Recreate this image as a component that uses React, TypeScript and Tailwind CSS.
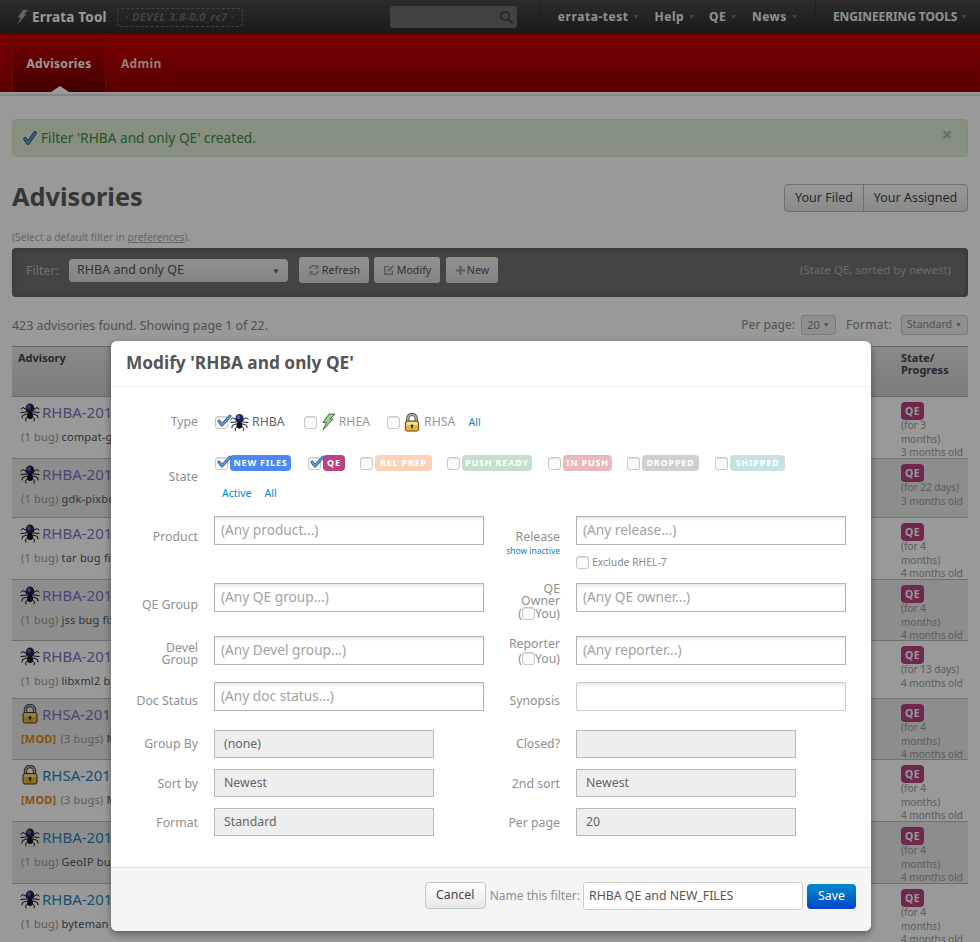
import React from "react";

function Bolt({ gray = false, className = "" }: { gray?: boolean; className?: string }) {
  return (
    <svg viewBox="0 0 16 18" className={className}>
      <path
        d="M9 1 L15 1 L10 6 L13 6 L3 17 L6.5 9.5 L3 9.5 Z"
        fill={gray ? "#a8a8a8" : "#9ccf8a"}
        stroke={gray ? "none" : "#4c6e4a"}
        strokeWidth="1"
        strokeLinejoin="round"
      />
    </svg>
  );
}

function Spider({ className = "" }: { className?: string }) {
  return (
    <svg viewBox="0 0 20 20" className={className}>
      <g stroke="#111" strokeWidth="1" fill="none" strokeLinecap="round">
        <path d="M7 8 L3 5.5 L1 7" />
        <path d="M13 8 L17 5.5 L19 7" />
        <path d="M6.5 10 L1 10.5" />
        <path d="M13.5 10 L19 10.5" />
        <path d="M7 12 L2.5 13.5 L2 16" />
        <path d="M13 12 L17.5 13.5 L18 16" />
        <path d="M8 14 L5.5 17 L6 19" />
        <path d="M12 14 L14.5 17 L14 19" />
      </g>
      <ellipse cx="10" cy="6.5" rx="4.3" ry="5" fill="#1d2350" />
      <ellipse cx="9" cy="5" rx="1.8" ry="2.2" fill="#5a64a8" />
      <ellipse cx="10" cy="13.5" rx="3" ry="3.5" fill="#0d0f25" />
    </svg>
  );
}

function Lock({ className = "" }: { className?: string }) {
  return (
    <svg viewBox="0 0 16 20" className={className}>
      <path d="M3.5 9 V6 a4.5 4.5 0 0 1 9 0 V9" fill="none" stroke="#444" strokeWidth="3.4" />
      <path d="M3.5 9 V6 a4.5 4.5 0 0 1 9 0 V9" fill="none" stroke="#b9b9b9" strokeWidth="1.6" />
      <rect x="1" y="8.5" width="14" height="10.5" rx="2" fill="#e6b93c" stroke="#4a3a10" strokeWidth="1" />
      <rect x="2" y="9.5" width="12" height="3" rx="1" fill="#f7e08a" />
      <circle cx="8" cy="13.5" r="1.5" fill="#3a2d08" />
      <rect x="7.4" y="13.5" width="1.2" height="3" fill="#3a2d08" />
    </svg>
  );
}

function Check({ on = false }: { on?: boolean }) {
  return (
    <span className="relative block h-[13px] w-[13px] shrink-0 rounded-[3px] border border-[#c8c8c0] bg-[#fbfbfb] shadow-[inset_0_1px_1px_rgba(0,0,0,0.12)]">
      {on && (
        <svg viewBox="0 0 16 14" className="absolute left-0 top-[-3px] h-[14px] w-[16px]">
          <path d="M3 7 L6 11 L14 2" fill="none" stroke="#35577f" strokeWidth="3" strokeLinecap="round" strokeLinejoin="round" />
          <path d="M3 7 L6 11 L14 2" fill="none" stroke="#5b9be6" strokeWidth="1.7" strokeLinecap="round" strokeLinejoin="round" />
        </svg>
      )}
    </span>
  );
}

function StateItem({ text, on, color, className }: { text: string; on?: boolean; color: string; className: string }) {
  return (
    <span className={`flex items-center gap-[2px] ${className}`}>
      <Check on={on} />
      <span className={`block h-[16px] rounded-[4px] text-center text-[9px] font-bold leading-[16px] tracking-[0.8px] whitespace-nowrap text-white ${color}`}>
        {text}
      </span>
    </span>
  );
}

function Field({ placeholder, value, className = "" }: { placeholder?: string; value?: string; className?: string }) {
  return (
    <div className={`h-[29px] w-[270px] border border-[#b2b2b2] bg-white px-[6px] text-[13.7px] leading-[25px] text-[#a3a3a3] shadow-[inset_0_4px_4px_-3px_rgba(0,0,0,0.14)] ${className}`}>
      {placeholder ?? value}
    </div>
  );
}

function Select({ value }: { value: string }) {
  return (
    <div className="h-[28px] w-[220px] border border-[#b8b8b8] bg-[#eeeeee] px-[9px] text-[12.3px] leading-[26px] text-[#666]">
      {value}
    </div>
  );
}

const Label = ({ children, className = "" }: { children: React.ReactNode; className?: string }) => (
  <div className={`text-right text-[12.3px] leading-[12px] text-[#8f8f8f] ${className}`}>{children}</div>
);

const rowCols = "grid grid-cols-[87px_270px_60px_270px] gap-x-4";

const rows = [
  { h: "h-[62px]", id: "RHBA-2013:15532", kind: "b", visited: true, note: "(1 bug)", txt: "compat-gcc bug fix update", a: "(for 3", b: "months)", c: "3 months old" },
  { h: "h-[59px]", id: "RHBA-2013:15476", kind: "b", visited: true, note: "(1 bug)", txt: "gdk-pixbuf2 bug fix update", a: "(for 22 days)", c: "3 months old" },
  { h: "h-[62px]", id: "RHBA-2013:15423", kind: "b", visited: true, note: "(1 bug)", txt: "tar bug fix update", a: "(for 4", b: "months)", c: "4 months old" },
  { h: "h-[61px]", id: "RHBA-2013:15419", kind: "b", visited: true, note: "(1 bug)", txt: "jss bug fix update", a: "(for 4", b: "months)", c: "4 months old" },
  { h: "h-[58px]", id: "RHBA-2013:15398", kind: "b", visited: true, note: "(1 bug)", txt: "libxml2 bug fix update", a: "(for 13 days)", c: "4 months old" },
  { h: "h-[61px]", id: "RHSA-2013:15377", kind: "s", visited: true, note: "(3 bugs)", txt: "Moderate: update", a: "(for 4", b: "months)", c: "4 months old" },
  { h: "h-[62px]", id: "RHSA-2013:15376", kind: "s", visited: false, note: "(3 bugs)", txt: "Moderate: update", a: "(for 4", b: "months)", c: "4 months old" },
  { h: "h-[62px]", id: "RHBA-2013:15360", kind: "b", visited: false, note: "(1 bug)", txt: "GeoIP bug fix update", a: "(for 4", b: "months)", c: "4 months old" },
  { h: "h-[62px]", id: "RHBA-2013:15358", kind: "b", visited: false, note: "(1 bug)", txt: "byteman bug fix update", a: "(for 4", b: "months)", c: "4 months old" },
];

export default function App() {
  return (
    <div className="relative h-[942px] w-[980px] overflow-hidden bg-[#ffffff] font-['Noto_Sans','Liberation_Sans',sans-serif]">
      {/* top bar */}
      <div className="flex h-[34px] items-center bg-gradient-to-b from-[#4a4a4a] to-[#2c2c2c] text-[12px] font-bold text-[#f0f0f0]">
        <Bolt gray className="ml-[15px] h-[18px] w-[14px]" />
        <span className="ml-[3px] text-[13.5px] tracking-[0.2px] text-[#ffffff]">Errata Tool</span>
        <span className="ml-[10px] flex h-[19px] w-[126px] items-center justify-center rounded-[4px] border border-dashed border-[#6f6f6f] text-[11px] italic tracking-[0.4px] text-[#6f6f6f]">
          · DEVEL 3.8-0.0_rc7 ·
        </span>
        <div className="ml-[147px] flex h-[22px] w-[127px] items-center justify-end rounded-[3px] bg-[#6e6e6e] pr-[3px]">
          <svg viewBox="0 0 16 16" className="h-[15px] w-[15px]">
            <circle cx="6.5" cy="6.5" r="4.5" fill="none" stroke="#3c3c3c" strokeWidth="1.6" />
            <path d="M10 10 L14.5 14.5" stroke="#3c3c3c" strokeWidth="2.2" />
          </svg>
        </div>
        <div className="ml-[23px] h-[34px] w-px bg-[#333333]" />
        <span className="ml-[17px] tracking-[0.55px]">errata-test</span>
        <span className="ml-[4px] w-[7px] text-[7px] text-[#777]">▼</span>
        <span className="ml-[15px] tracking-[0.5px]">Help</span>
        <span className="ml-[4px] w-[7px] text-[7px] text-[#777]">▼</span>
        <span className="ml-[14px] tracking-[0.3px]">QE</span>
        <span className="ml-[4px] w-[7px] text-[7px] text-[#777]">▼</span>
        <span className="ml-[15px] tracking-[0.5px]">News</span>
        <span className="ml-[4px] w-[7px] text-[7px] text-[#777]">▼</span>
        <div className="ml-[17px] h-[34px] w-px bg-[#333333]" />
        <span className="ml-[17px] tracking-[-0.1px]">ENGINEERING TOOLS</span>
        <span className="ml-[3px] w-[7px] text-[7px] text-[#777]">▼</span>
      </div>

      {/* red bar */}
      <div className="flex h-[58px] bg-gradient-to-b from-[#cc0000] to-[#960000] pl-[12px] text-[12px] font-bold tracking-[0.3px]">
        <div className="relative flex w-[94px] items-start justify-center border-x border-[#b01010] bg-gradient-to-b from-[#cc0000] to-[#6f0000] pt-[21px] text-[#ffffff]">
          Advisories
          <svg viewBox="0 0 18 6" className="absolute bottom-0 left-[38px] h-[6px] w-[18px]">
            <path d="M0 6 L9 0 L18 6 Z" fill="#ffffff" />
          </svg>
        </div>
        <div className="ml-[15px] pt-[21px] text-[#f4d0d0]">Admin</div>
      </div>
      <div className="mt-[2px] h-[2px] bg-[#dddddd]" />

      <div className="px-[12px]">
        {/* alert */}
        <div className="relative mt-[23px] flex h-[38px] items-center rounded-[4px] border border-[#d6e9c6] bg-[#dff0d8] pl-[9px] text-[13.7px] text-[#468847]">
          <svg viewBox="0 0 16 16" className="mr-[3px] h-[16px] w-[16px]">
            <path d="M3 9 L6 13 L13 3" fill="none" stroke="#1f3d66" strokeWidth="3.6" strokeLinecap="round" strokeLinejoin="round" />
            <path d="M3 9 L6 13 L13 3" fill="none" stroke="#6ea4e8" strokeWidth="2" strokeLinecap="round" strokeLinejoin="round" />
          </svg>
          Filter 'RHBA and only QE' created.
          <span className="absolute right-[15px] top-[2px] text-[18px] font-bold leading-[24px] text-[#a9b5a3]">×</span>
        </div>

        {/* heading */}
        <div className="mt-[20px] flex h-[53px] items-start justify-between">
          <h1 className="text-[25.3px] font-bold leading-[38px] text-[#5a5a5a]">Advisories</h1>
          <div className="mt-[7px] flex h-[28px] rounded-[4px] border border-[#bbbbbb] bg-gradient-to-b from-[#ffffff] to-[#e6e6e6] text-[12.5px] leading-[26px] text-[#444444]">
            <span className="w-[79px] border-r border-[#bbbbbb] text-center">Your Filed</span>
            <span className="w-[103px] text-center">Your Assigned</span>
          </div>
        </div>

        <div className="h-[15px] text-[10.2px] leading-[15px] text-[#aaaaaa]">
          (Select a default filter in <span className="underline">preferences</span>).
        </div>

        {/* filter panel */}
        <div className="mt-[3px] flex h-[49px] items-start rounded-[4px] bg-[#727272] pl-[14px] text-[12px] shadow-[inset_0_0_6px_rgba(0,0,0,0.3)]">
          <span className="mt-[14px] text-[12.5px] text-[#bbbbbb]">Filter:</span>
          <div className="ml-[10px] mt-[11px] flex h-[23px] w-[219px] items-center justify-between rounded-[4px] bg-gradient-to-b from-[#f0f0f0] to-[#dcdcdc] pl-[8px] pr-[8px] text-[12.5px] text-[#555555]">
            RHBA and only QE
            <span className="text-[8px] text-[#666666]">▼</span>
          </div>
          <div className="ml-[11px] mt-[9px] flex h-[26px] w-[70px] items-center justify-center gap-[2px] rounded-[3px] bg-gradient-to-b from-[#f2f2f2] to-[#dcdcdc] text-[10.7px] text-[#555555]">
            <svg viewBox="0 0 14 14" className="h-[12px] w-[12px]"><path d="M2 6 A5 5 0 0 1 11 4 M12 8 A5 5 0 0 1 3 10" fill="none" stroke="#999" strokeWidth="1.6" /><path d="M11.5 1 V5 H8 M2.5 13 V9 H6" fill="none" stroke="#999" strokeWidth="1.2" /></svg>
            Refresh
          </div>
          <div className="ml-[5px] mt-[9px] flex h-[26px] w-[66px] items-center justify-center gap-[2px] rounded-[3px] bg-gradient-to-b from-[#f2f2f2] to-[#dcdcdc] text-[10.7px] text-[#555555]">
            <svg viewBox="0 0 14 14" className="h-[12px] w-[12px]"><path d="M11 8 V12 H2 V3 H7" fill="none" stroke="#999" strokeWidth="1.6" /><path d="M5.5 9 L6 6.5 L11.5 1.5 L13 3 L7.5 8.5 Z" fill="#999" /></svg>
            Modify
          </div>
          <div className="ml-[6px] mt-[9px] flex h-[26px] w-[52px] items-center justify-center gap-[1px] rounded-[3px] bg-gradient-to-b from-[#f2f2f2] to-[#dcdcdc] text-[10.7px] text-[#555555]">
            <svg viewBox="0 0 12 12" className="h-[11px] w-[11px]"><path d="M6 1 V11 M1 6 H11" stroke="#999" strokeWidth="2.4" /></svg>
            New
          </div>
          <span className="ml-auto mr-[17px] mt-[13px] text-[11.5px] text-[#b4b4b4]">(State QE, sorted by newest)</span>
        </div>

        {/* result info */}
        <div className="mt-[16px] flex h-[33px] items-start justify-between">
          <span className="mt-[4px] text-[12.4px] text-[#888888]">423 advisories found. Showing page 1 of 22.</span>
          <div className="mt-[2px] flex items-center text-[12px] text-[#888888]">
            <span>Per page:</span>
            <span className="ml-[6px] flex h-[20px] w-[35px] items-center justify-center gap-[3px] rounded-[3px] border border-[#cccccc] bg-[#eeeeee] text-[11px]">
              20 <span className="text-[7px]">▼</span>
            </span>
            <span className="ml-[10px] tracking-[0.3px]">Format:</span>
            <span className="ml-[9px] flex h-[20px] w-[67px] items-center justify-center gap-[3px] rounded-[3px] border border-[#cccccc] bg-[#eeeeee] text-[10.5px]">
              Standard <span className="text-[7px]">▼</span>
            </span>
          </div>
        </div>

        {/* table */}
        <div className="relative flex h-[51px] justify-between border-y border-[#aaaaaa] bg-gradient-to-b from-[#e6e6e6] to-[#cfcfcf] pt-[3px] text-[11px] font-bold leading-[12px] text-[#444444]">
          <span className="ml-[6px] mt-[2px]">Advisory</span>
          <span className="mr-[17px] mt-[2px] w-[50px]">State/<br />Progress</span>
        </div>
        {rows.map((r, i) => (
          <div key={r.id} className={`relative flex justify-between border-b border-[#bbbbbb] ${r.h} ${i % 2 === 1 ? "bg-[#ebebeb]" : "bg-[#ffffff]"}`}>
            <div className="ml-[8px] pt-[5px]">
              <div className="flex h-[20px] items-center gap-[2px] text-[15px]">
                {r.kind === "b" ? <Spider className="h-[20px] w-[20px]" /> : <Lock className="ml-[2px] mr-[2px] h-[20px] w-[16px]" />}
                <span className={r.visited ? "text-[#8471c2]" : "text-[#1d87bd]"}>{r.id}</span>
              </div>
              <div className="ml-[1px] mt-[8px] text-[11px] leading-[14px] tracking-[0.2px]">
                {r.kind === "s" && <span className="mr-[4px] font-bold text-[#dd8a12]">[MOD]</span>}
                <span className="text-[#999999]">{r.note}</span> <span className="text-[#555555]">{r.txt}</span>
              </div>
            </div>
            <div className="w-[67px] pt-[5px] text-[10px] leading-[13.5px] text-[#999999]">
              <span className="block h-[18px] w-[23px] rounded-[4px] bg-[#b94283] text-center text-[10.5px] font-bold leading-[18px] tracking-[0.5px] text-white">QE</span>
              <div className="mt-[-1px]">{r.a}</div>
              {r.b && <div>{r.b}</div>}
              <div>{r.c}</div>
            </div>
          </div>
        ))}
      </div>

      {/* overlay */}
      <div className="absolute inset-0 bg-black/40" />

      {/* modal */}
      <div className="absolute left-[111px] top-[341px] flex h-[590px] w-[760px] flex-col overflow-hidden rounded-[6px] bg-white shadow-[0_3px_7px_rgba(0,0,0,0.4)]">
        <div className="h-[46px] shrink-0 border-b border-[#eeeeee] pl-[15px] pt-[8px] text-[17.3px] font-bold leading-[27px] text-[#555555]">
          Modify 'RHBA and only QE'
        </div>
        <div className="flex-1 text-[12.3px]">
          {/* Type */}
          <div className="mt-[25px] flex h-[20px] items-center">
            <div className="w-[87px] text-right text-[#8f8f8f]">Type</div>
            <span className="ml-[17px]"><Check on /></span>
            <Spider className="ml-[2px] h-[20px] w-[19px]" />
            <span className="ml-[3px] text-[#666666]">RHBA</span>
            <span className="ml-[19px]"><Check /></span>
            <Bolt className="ml-[3px] h-[18px] w-[16px]" />
            <span className="ml-[3px] text-[#999999]">RHEA</span>
            <span className="ml-[17px]"><Check /></span>
            <Lock className="ml-[4px] h-[19px] w-[16px]" />
            <span className="ml-[4px] text-[#999999]">RHSA</span>
            <span className="ml-[13px] mt-[2px] text-[10.5px] text-[#0088cc]">All</span>
          </div>
          {/* State */}
          <div className="mt-[23px] flex h-[16px] items-start">
            <div className="w-[87px] pt-[13px] text-right leading-[18px] text-[#8f8f8f]">State</div>
            <StateItem on text="NEW FILES" color="w-[61px] bg-[#4b88f0]" className="ml-[17px]" />
            <StateItem on text="QE" color="w-[22px] bg-[#b94283]" className="ml-[17px]" />
            <StateItem text="REL PREP" color="w-[57px] bg-[#fcd3b8]" className="ml-[15px]" />
            <StateItem text="PUSH READY" color="w-[70px] bg-[#c3decb]" className="ml-[15px]" />
            <StateItem text="IN PUSH" color="w-[49px] bg-[#e9b8b8]" className="ml-[16px]" />
            <StateItem text="DROPPED" color="w-[57px] bg-[#cfcfcf]" className="ml-[15px]" />
            <StateItem text="SHIPPED" color="w-[55px] bg-[#c5e2e2]" className="ml-[16px]" />
          </div>
          <div className="ml-[111px] mt-[14px] flex h-[16px] items-center gap-[13px] pt-[1px] text-[10.5px] text-[#0088cc]">
            <span>Active</span>
            <span>All</span>
          </div>
          {/* Product / Release */}
          <div className={`${rowCols} mt-[15px] h-[67px]`}>
            <Label className="pt-[15px]">Product</Label>
            <Field placeholder="(Any product...)" />
            <div className="pt-[15px] text-right">
              <div className="text-[12.3px] leading-[12px] text-[#8f8f8f]">Release</div>
              <div className="mt-[2px] whitespace-nowrap text-[8.5px] leading-[11px] text-[#0088cc]">show inactive</div>
            </div>
            <div>
              <Field placeholder="(Any release...)" />
              <div className="mt-[10px] flex items-center gap-[3px] text-[10.4px] text-[#888888]">
                <Check /> Exclude RHEL-7
              </div>
            </div>
          </div>
          {/* QE Group */}
          <div className={`${rowCols} h-[53px]`}>
            <Label className="pt-[16px]">QE Group</Label>
            <Field placeholder="(Any QE group...)" />
            <Label>
              QE<br />Owner<br />
              <span className="flex items-center justify-end">(<Check />You)</span>
            </Label>
            <Field placeholder="(Any QE owner...)" />
          </div>
          {/* Devel Group */}
          <div className={`${rowCols} h-[46px]`}>
            <Label className="pt-[6px]">Devel<br />Group</Label>
            <Field placeholder="(Any Devel group...)" />
            <Label className="pt-[2px]">
              Reporter<br />
              <span className="mt-[2px] flex items-center justify-end">(<Check />You)</span>
            </Label>
            <Field placeholder="(Any reporter...)" />
          </div>
          {/* Doc status */}
          <div className={`${rowCols} h-[48px]`}>
            <Label className="pt-[13px]">Doc Status</Label>
            <Field placeholder="(Any doc status...)" />
            <Label className="pt-[13px]">Synopsis</Label>
            <Field value="" className="rounded-[2px] border-[#cccccc]" />
          </div>
          {/* selects */}
          <div className={`${rowCols} h-[39px]`}>
            <Label className="pt-[8px]">Group By</Label>
            <Select value="(none)" />
            <Label className="pt-[8px]">Closed?</Label>
            <Select value="" />
          </div>
          <div className={`${rowCols} h-[39px]`}>
            <Label className="pt-[9px]">Sort by</Label>
            <Select value="Newest" />
            <Label className="pt-[9px]">2nd sort</Label>
            <Select value="Newest" />
          </div>
          <div className={`${rowCols} h-[28px]`}>
            <Label className="pt-[9px]">Format</Label>
            <Select value="Standard" />
            <Label className="pt-[9px]">Per page</Label>
            <Select value="20" />
          </div>
        </div>
        {/* footer */}
        <div className="flex h-[64px] shrink-0 items-start justify-end rounded-b-[6px] border-t border-[#dddddd] bg-[#f5f5f5] pr-[15px] pt-[14px]">
          <div className="flex h-[27px] w-[61px] items-center justify-center rounded-[4px] border border-[#c4c4c4] bg-gradient-to-b from-[#ffffff] to-[#e6e6e6] text-[12.3px] text-[#444444]">Cancel</div>
          <span className="ml-[4px] mt-[5px] text-[12px] text-[#8f8f8f]">Name this filter:</span>
          <div className="ml-[3px] h-[28px] w-[220px] rounded-[3px] border border-[#cccccc] bg-white pl-[5px] text-[12.3px] leading-[26px] text-[#555555]">RHBA QE and NEW_FILES</div>
          <div className="ml-[4px] mt-[2px] flex h-[25px] w-[49px] items-center justify-center rounded-[4px] bg-gradient-to-b from-[#0088cc] to-[#0044cc] text-[12.3px] text-white">Save</div>
        </div>
      </div>
    </div>
  );
}
